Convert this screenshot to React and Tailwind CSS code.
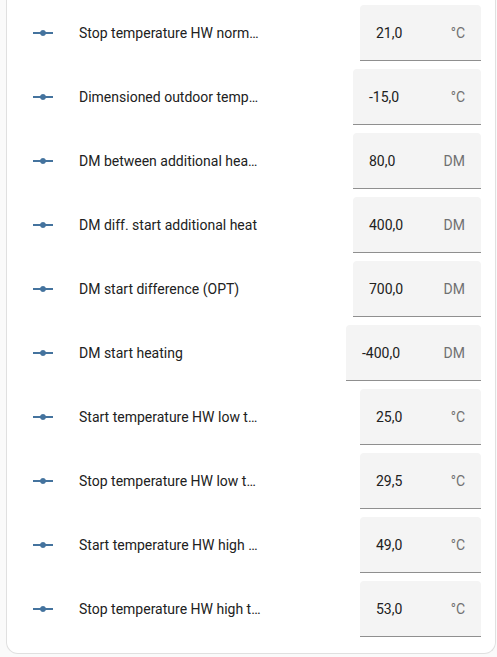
import React from "react";

const rows = [
  { name: "Stop temperature HW normal mode", value: "21,0", unit: "°C", w: "w-[121px]" },
  { name: "Dimensioned outdoor temperature", value: "-15,0", unit: "°C", w: "w-[128px]" },
  { name: "DM between additional heat steps", value: "80,0", unit: "DM", w: "w-[128px]" },
  { name: "DM diff. start additional heat", value: "400,0", unit: "DM", w: "w-[128px]" },
  { name: "DM start difference (OPT)", value: "700,0", unit: "DM", w: "w-[128px]" },
  { name: "DM start heating", value: "-400,0", unit: "DM", w: "w-[135px]" },
  { name: "Start temperature HW low temperature", value: "25,0", unit: "°C", w: "w-[121px]" },
  { name: "Stop temperature HW low temperature", value: "29,5", unit: "°C", w: "w-[121px]" },
  { name: "Start temperature HW high temperature", value: "49,0", unit: "°C", w: "w-[121px]" },
  { name: "Stop temperature HW high temperature", value: "53,0", unit: "°C", w: "w-[121px]" },
];

function RayVertex() {
  return (
    <svg viewBox="0 0 24 24" className="w-6 h-6" fill="#44739e">
      <path d="M2,11H9.17C9.58,9.83 10.69,9 12,9C13.31,9 14.42,9.83 14.83,11H22V13H14.83C14.42,14.17 13.31,15 12,15C10.69,15 9.58,14.17 9.17,13H2V11Z" />
    </svg>
  );
}

function NumberRow({ row }) {
  return (
    <div className="flex items-center h-14">
      <div className="w-10 h-10 flex items-center justify-center shrink-0">
        <RayVertex />
      </div>
      <div className="ml-4 w-[182px] truncate text-sm text-[#212121]">
        {row.name}
      </div>
      <div className="flex-1 flex justify-end">
        <div
          className={`${row.w} h-14 bg-[#f4f4f4] rounded-t border-b border-[#8f8f8f] flex items-center justify-between px-4 text-sm`}
        >
          <span className="text-[#212121]">{row.value}</span>
          <span className="text-[#707070]">{row.unit}</span>
        </div>
      </div>
    </div>
  );
}

export default function App() {
  return (
    <div
      className="min-h-[657px] bg-[#fafafa] pl-[6px] pr-[1px]"
      style={{ fontFamily: "Roboto, 'Liberation Sans', sans-serif" }}
    >
      <div className="bg-white border-x border-b border-[#e0e0e0] rounded-b-xl pt-[5px] pb-4 pl-4 pr-[14px]">
        <div className="flex flex-col gap-2">
          {rows.map((row) => (
            <NumberRow key={row.name} row={row} />
          ))}
        </div>
      </div>
    </div>
  );
}
